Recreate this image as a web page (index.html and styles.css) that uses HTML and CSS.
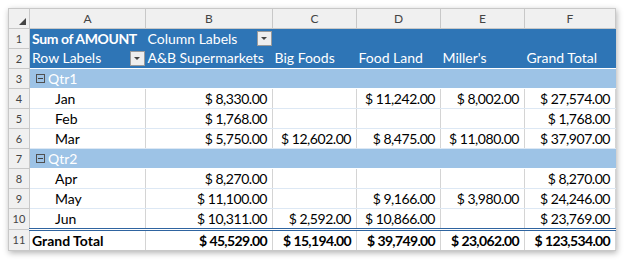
FILE: index.html
```html
<!DOCTYPE html>
<html>
<head>
<meta charset="utf-8">
<link rel="stylesheet" href="styles.css">
</head>
<body>
<div class="sheet">
<table class="grid">
  <colgroup>
    <col class="c-rh"><col class="c-a"><col class="c-b"><col class="c-c"><col class="c-d"><col class="c-e"><col class="c-f">
  </colgroup>
  <tr class="colhdr">
    <th class="corner"><span class="tri"></span></th>
    <th>A</th><th>B</th><th>C</th><th>D</th><th>E</th><th>F</th>
  </tr>
  <tr class="dark">
    <th class="rh">1</th>
    <td class="bold">Sum of AMOUNT</td>
    <td><div class="withbtn"><span>Column Labels</span><span class="dd"></span></div></td>
    <td></td><td></td><td></td><td></td>
  </tr>
  <tr class="dark">
    <th class="rh">2</th>
    <td><div class="withbtn"><span>Row Labels</span><span class="dd"></span></div></td>
    <td>A&amp;B Supermarkets</td>
    <td>Big Foods</td><td>Food Land</td><td>Miller's</td><td>Grand Total</td>
  </tr>
  <tr class="qtr">
    <th class="rh">3</th>
    <td colspan="6"><div class="qlabel"><span class="minus"></span><span>Qtr1</span></div></td>
  </tr>
  <tr class="data">
    <th class="rh">4</th>
    <td class="mon">Jan</td>
    <td class="num"><span class="cur">$</span>8,330.00</td><td class="num"></td><td class="num"><span class="cur">$</span>11,242.00</td><td class="num"><span class="cur">$</span>8,002.00</td><td class="num"><span class="cur">$</span>27,574.00</td>
  </tr>
  <tr class="data">
    <th class="rh">5</th>
    <td class="mon">Feb</td>
    <td class="num"><span class="cur">$</span>1,768.00</td><td class="num"></td><td class="num"></td><td class="num"></td><td class="num"><span class="cur">$</span>1,768.00</td>
  </tr>
  <tr class="data">
    <th class="rh">6</th>
    <td class="mon">Mar</td>
    <td class="num"><span class="cur">$</span>5,750.00</td><td class="num"><span class="cur">$</span>12,602.00</td><td class="num"><span class="cur">$</span>8,475.00</td><td class="num"><span class="cur">$</span>11,080.00</td><td class="num"><span class="cur">$</span>37,907.00</td>
  </tr>
  <tr class="qtr">
    <th class="rh">7</th>
    <td colspan="6"><div class="qlabel"><span class="minus"></span><span>Qtr2</span></div></td>
  </tr>
  <tr class="data">
    <th class="rh">8</th>
    <td class="mon">Apr</td>
    <td class="num"><span class="cur">$</span>8,270.00</td><td class="num"></td><td class="num"></td><td class="num"></td><td class="num"><span class="cur">$</span>8,270.00</td>
  </tr>
  <tr class="data">
    <th class="rh">9</th>
    <td class="mon">May</td>
    <td class="num"><span class="cur">$</span>11,100.00</td><td class="num"></td><td class="num"><span class="cur">$</span>9,166.00</td><td class="num"><span class="cur">$</span>3,980.00</td><td class="num"><span class="cur">$</span>24,246.00</td>
  </tr>
  <tr class="data last">
    <th class="rh">10</th>
    <td class="mon">Jun</td>
    <td class="num"><span class="cur">$</span>10,311.00</td><td class="num"><span class="cur">$</span>2,592.00</td><td class="num"><span class="cur">$</span>10,866.00</td><td class="num"></td><td class="num"><span class="cur">$</span>23,769.00</td>
  </tr>
  <tr class="total">
    <th class="rh">11</th>
    <td>Grand Total</td>
    <td class="num"><span class="cur">$</span>45,529.00</td><td class="num"><span class="cur">$</span>15,194.00</td><td class="num"><span class="cur">$</span>39,749.00</td><td class="num"><span class="cur">$</span>23,062.00</td><td class="num"><span class="cur">$</span>123,534.00</td>
  </tr>
</table>
</div>
</body>
</html>
```

FILE: styles.css
```css
html, body {
  margin: 0;
  padding: 0;
  background: #ffffff;
}
body {
  padding: 8px;
  font-family: Lato, "Liberation Sans", sans-serif;
}
.sheet {
  display: inline-block;
  box-shadow: 1px 2px 6px rgba(0, 0, 0, 0.3);
}
.grid {
  border-collapse: collapse;
  table-layout: fixed;
  width: 607px;
  font-size: 14px;
  color: #000;
}
.c-rh { width: 21px; }
.c-a { width: 116px; }
.c-b { width: 127px; }
.c-c { width: 84px; }
.c-d { width: 84px; }
.c-e { width: 84px; }
.c-f { width: 91px; }
.grid tr { height: 20px; }
.grid td, .grid th {
  padding: 0 2px;
  height: 19px;
  white-space: nowrap;
  overflow: hidden;
  line-height: 18px;
}
.colhdr th {
  background: #f0f0f0;
  border: 1px solid #c8c8c8;
  font-weight: normal;
  font-size: 12px;
  color: #444;
  text-align: center;
}
.corner {
  position: relative;
}
.tri {
  position: absolute;
  right: 3px;
  bottom: 3px;
  width: 0;
  height: 0;
  border-left: 7px solid transparent;
  border-bottom: 7px solid #444;
}
.rh {
  background: #f0f0f0;
  border: 1px solid #c8c8c8;
  font-weight: normal;
  font-size: 11px;
  color: #444;
  text-align: center;
  padding: 0;
}
.dark td {
  background: #2e75b6;
  color: #fff;
}
.bold {
  font-weight: bold;
  letter-spacing: -0.4px;
}
.withbtn {
  display: flex;
  align-items: center;
  justify-content: space-between;
  margin-right: -1px;
}
.dd {
  width: 15px;
  height: 15px;
  box-sizing: border-box;
  background: #eeeeee;
  border: 1px solid #9a9a9a;
  display: flex;
  align-items: center;
  justify-content: center;
}
.dd::after {
  content: "";
  width: 0;
  height: 0;
  border-left: 3px solid transparent;
  border-right: 3px solid transparent;
  border-top: 3px solid #444;
}
.qtr td {
  background: #9dc3e6;
  color: #fff;
  border-top: 1px solid #ffffff;
  border-bottom: 1px solid #ffffff;
}
.qlabel {
  display: flex;
  align-items: center;
  gap: 3px;
  padding-left: 4px;
}
.minus {
  width: 9px;
  height: 9px;
  box-sizing: border-box;
  border: 1px solid #505050;
  display: flex;
  align-items: center;
  justify-content: center;
}
.minus::after {
  content: "";
  width: 5px;
  height: 1px;
  background: #404040;
}
.data td {
  border-left: 1px solid #d4d4d4;
  border-right: 1px solid #d4d4d4;
  border-bottom: 1px solid #dde8f4;
}
.data td.mon {
  padding-left: 25px;
}
.num {
  text-align: right;
  padding-right: 5px !important;
  letter-spacing: -0.45px;
}
.cur {
  margin-right: 3px;
}
.total td {
  font-weight: bold;
  border-top: 3px double #2f64a0;
  border-left: 1px solid #d4d4d4;
  border-right: 1px solid #d4d4d4;
  border-bottom: 1px solid #c8c8c8;
}
.total .num {
  letter-spacing: -0.65px;
}
```
